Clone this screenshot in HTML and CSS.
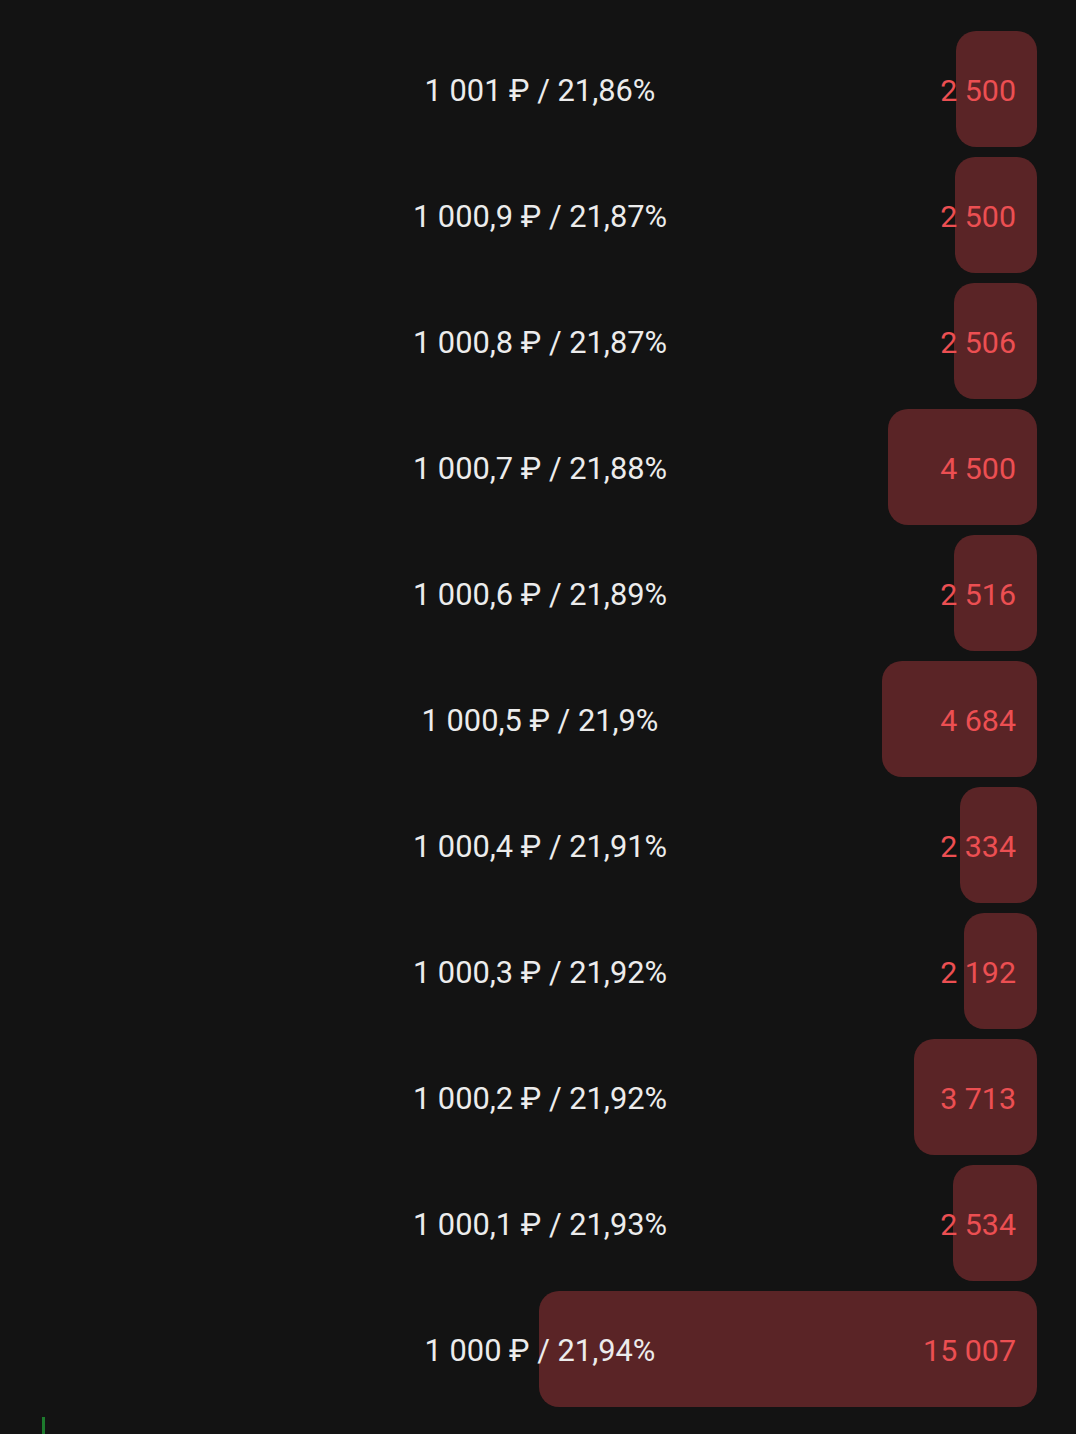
FILE: index.html
```html
<!DOCTYPE html>
<html lang="ru">
<head>
    <meta charset="UTF-8">
    <meta name="viewport" content="width=device-width, initial-scale=1.0">
    <title>Стакан</title>
    <link rel="stylesheet" href="styles.css">
</head>
<body>

<div class="book">
    <div class="row">
        <div class="bar" style="width: 81px;"><span class="qty">2 500</span></div>
        <div class="price">1 001 ₽ / 21,86%</div>
    </div>
    <div class="row">
        <div class="bar" style="width: 82px;"><span class="qty">2 500</span></div>
        <div class="price">1 000,9 ₽ / 21,87%</div>
    </div>
    <div class="row">
        <div class="bar" style="width: 83px;"><span class="qty">2 506</span></div>
        <div class="price">1 000,8 ₽ / 21,87%</div>
    </div>
    <div class="row">
        <div class="bar" style="width: 149px;"><span class="qty">4 500</span></div>
        <div class="price">1 000,7 ₽ / 21,88%</div>
    </div>
    <div class="row">
        <div class="bar" style="width: 83px;"><span class="qty">2 516</span></div>
        <div class="price">1 000,6 ₽ / 21,89%</div>
    </div>
    <div class="row">
        <div class="bar" style="width: 155px;"><span class="qty">4 684</span></div>
        <div class="price">1 000,5 ₽ / 21,9%</div>
    </div>
    <div class="row">
        <div class="bar" style="width: 77px;"><span class="qty">2 334</span></div>
        <div class="price">1 000,4 ₽ / 21,91%</div>
    </div>
    <div class="row">
        <div class="bar" style="width: 73px;"><span class="qty">2 192</span></div>
        <div class="price">1 000,3 ₽ / 21,92%</div>
    </div>
    <div class="row">
        <div class="bar" style="width: 123px;"><span class="qty">3 713</span></div>
        <div class="price">1 000,2 ₽ / 21,92%</div>
    </div>
    <div class="row">
        <div class="bar" style="width: 84px;"><span class="qty">2 534</span></div>
        <div class="price">1 000,1 ₽ / 21,93%</div>
    </div>
    <div class="row">
        <div class="bar" style="width: 498px;"><span class="qty">15 007</span></div>
        <div class="price">1 000 ₽ / 21,94%</div>
    </div>
</div>

<div class="tick"></div>

</body>
</html>
```

FILE: styles.css
```css
body {
    margin: 0;
    background: #131313;
    font-family: Roboto, "Noto Sans", sans-serif;
    overflow: hidden;
}
.book {
    display: flex;
    flex-direction: column;
    gap: 10px;
    padding-top: 31px;
}
.row {
    display: grid;
    grid-template-columns: 1fr;
    height: 116px;
    padding-left: 4px;
}
.row > * {
    grid-area: 1 / 1;
}
.bar {
    justify-self: end;
    margin-right: 39px;
    height: 116px;
    box-sizing: border-box;
    background: #5a2426;
    border-radius: 20px;
    display: flex;
    align-items: center;
    justify-content: flex-end;
    padding-right: 21px;
    padding-top: 2px;
}
.qty {
    color: #ec4f52;
    font-size: 30.4px;
    white-space: nowrap;
}
.price {
    justify-self: center;
    align-self: center;
    position: relative;
    padding-top: 2px;
    color: #ececec;
    font-size: 30.8px;
    white-space: nowrap;
}
.tick {
    margin: 10px 0 0 42px;
    width: 3px;
    height: 17px;
    background: #1d7a2d;
}
```
